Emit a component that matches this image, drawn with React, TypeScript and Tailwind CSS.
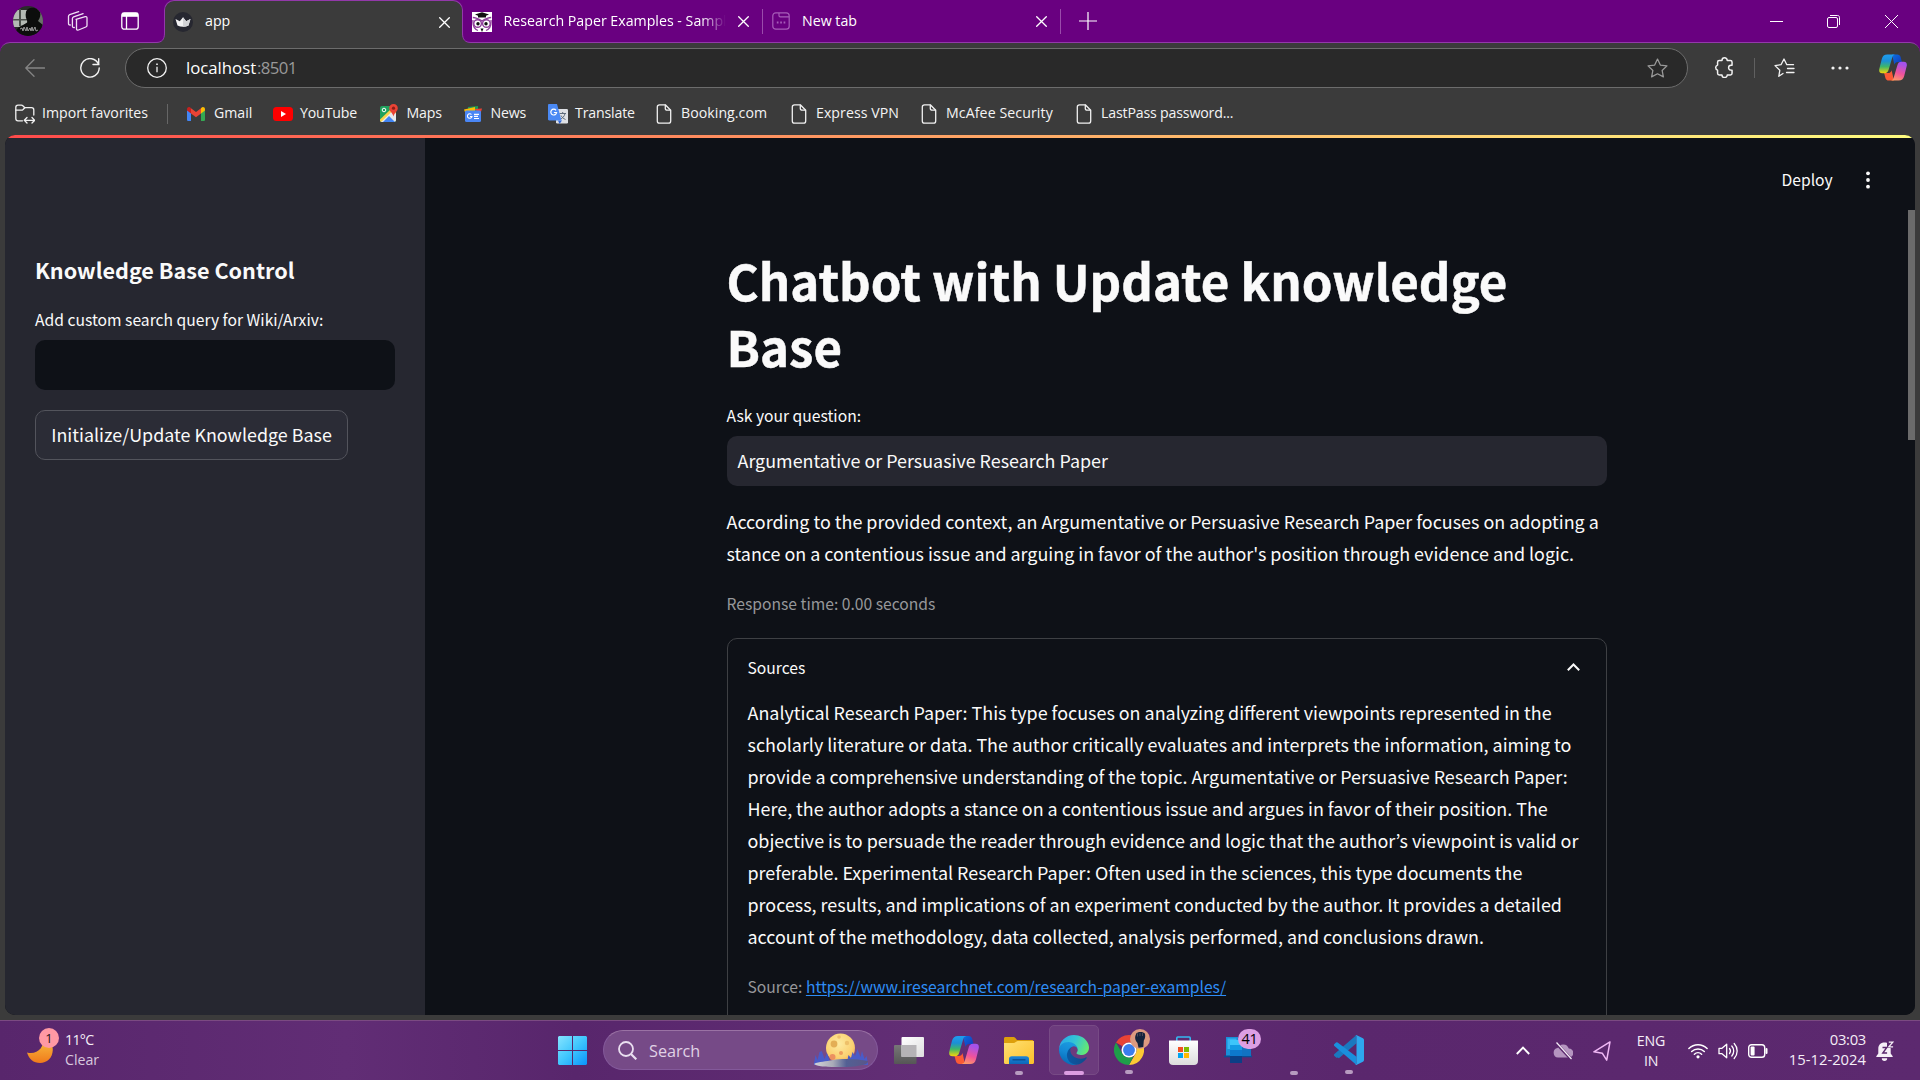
import type { ReactNode } from "react";

const UI = "font-['Open_Sans',sans-serif]";
const SRC = "font-['Noto_Sans_CJK_KR','Noto_Sans',sans-serif]";

/* ---------- Browser icons ---------- */

const Avatar = () => (
  <svg viewBox="0 0 30 30" className="h-[30px] w-[30px] rounded-full">
    <rect width="30" height="30" fill="#2a2c2a" />
    <path d="M0 4h14v17H0z" fill="#b4bab4" />
    <path d="M6 3h2v17H6zM0 13h14v1.600H0z" fill="#4b504b" />
    <path d="M22 2l8 4v14l-6-2z" fill="#6a706a" />
    <path d="M13 6c1-5 12-6 14 0 1 3 0 6-2 9l5 4v11H2c0-6 3-9 8-11l5-3c-2-3-3-6-2-10z" fill="#0c0d0c" />
    <path d="M7 23l2-1 1 3 1-4 2 4 1-4 1 4 2-3 1 3 1-4 1 4 2-4 1 4 2-1" stroke="#a8a8a8" strokeWidth=".9" fill="none" />
  </svg>
);

const Workspaces = () => (
  <svg viewBox="0 0 22 22" className="h-[22px] w-[22px]" fill="none" stroke="#f0dff4" strokeWidth="1.300" strokeLinejoin="round">
    <path d="M9 9.300l9.200-2.600c1-.3 1.800.2 1.800 1.200v7.500c0 .8-.4 1.300-1.200 1.600L11.500 20c-1.300.4-2-.1-2-1.300V9.300z" />
    <path d="M7.300 17.500c-1.200.2-1.900-.3-1.900-1.400V8.500c0-.9.4-1.400 1.200-1.700l9.500-3.100" strokeLinecap="round" />
    <path d="M3.300 15c-1.200.1-1.800-.4-1.800-1.400V6.300c0-.9.4-1.400 1.200-1.700l9-3" strokeLinecap="round" />
  </svg>
);

const TabActions = () => (
  <svg viewBox="0 0 18 18" className="h-[18px] w-[18px]" fill="none" stroke="#fff" strokeWidth="1.300">
    <rect x=".8" y=".8" width="16.400" height="16.400" rx="2.500" />
    <path d="M1 2.800h16" strokeWidth="4" />
    <path d="M5.500 4v13" />
  </svg>
);

const Crown = () => (
  <svg viewBox="0 0 20 20" className="h-[20px] w-[20px]">
    <circle cx="10" cy="10" r="10" fill="#262730" />
    <path d="M2.500 7l4.300 2.200L10 5.200l3.200 4L17.500 7l-2 6.500c-3.500 1.600-7.500 1.600-11 0z" fill="#f2f2f3" />
    <path d="M10 5.200l3.200 4L17.500 7l-2 6.500c-1.700.8-3.500 1.200-5.500 1.200z" fill="#d2d3d6" />
  </svg>
);

const Owl = () => (
  <svg viewBox="0 0 20 20" className="h-[20px] w-[20px]">
    <rect width="20" height="20" fill="#fff" />
    <path d="M3 2.500L10 .3l7 2.200-3 1.300v1.700H6V3.800z" fill="#111" />
    <path d="M.8 5.500C4 5.500 6 6.500 10 9c4-2.500 6-3.500 9.200-3.500M1 8c-.5 6 1 9 5 10.500M19 8c.5 6-1 9-5 10.500" stroke="#8f3f9b" strokeWidth="1.300" fill="none" />
    <circle cx="5.600" cy="11.500" r="3.800" fill="#fff" stroke="#8f3f9b" strokeWidth="1.400" />
    <circle cx="14.400" cy="11.500" r="3.800" fill="#fff" stroke="#8f3f9b" strokeWidth="1.400" />
    <circle cx="6" cy="11.800" r="1.700" fill="#111" />
    <circle cx="14" cy="11.800" r="1.700" fill="#111" />
    <path d="M8.500 16.500h3L10 20z" fill="#111" />
  </svg>
);

const NewTabIcon = () => (
  <svg viewBox="0 0 18 18" className="h-[18px] w-[18px]" fill="none" stroke="#a75db8" strokeWidth="1.200">
    <rect x=".8" y=".8" width="16.400" height="16.400" rx="3" />
    <path d="M7 1v2.500c0 .8.500 1.300 1.300 1.300H17" />
    <path d="M4.800 10.500h1.700M8.200 10.500h1.700M11.600 10.500h1.700" strokeWidth="1.800" />
  </svg>
);

const Cross = ({ className = "h-[11px] w-[11px]" }: { className?: string }) => (
  <svg viewBox="0 0 11 11" className={className} fill="none" stroke="#fff" strokeWidth="1.300" strokeLinecap="round">
    <path d="M.7.7l9.600 9.600M10.300.7L.7 10.300" />
  </svg>
);

const Copilot = ({ id, className }: { id: string; className: string }) => (
  <svg viewBox="0 0 30 28" className={className}>
    <defs>
      <linearGradient id={id + "a"} x1="0" y1="0" x2="0" y2="1">
        <stop offset="0" stopColor="#1f9df0" />
        <stop offset=".35" stopColor="#1b8fd6" />
        <stop offset=".65" stopColor="#3fb768" />
        <stop offset="1" stopColor="#f7d40a" />
      </linearGradient>
      <linearGradient id={id + "b"} x1=".3" y1="0" x2="0" y2="1">
        <stop offset="0" stopColor="#a552ea" />
        <stop offset=".5" stopColor="#f0539b" />
        <stop offset="1" stopColor="#ffa65e" />
      </linearGradient>
      <linearGradient id={id + "c"} x1="0" y1="0" x2="1" y2="1">
        <stop offset="0" stopColor="#0a6fe0" />
        <stop offset="1" stopColor="#1435b8" />
      </linearGradient>
    </defs>
    <path d="M14 0h5.500c2 0 3.200 1 3.700 3l1.300 5h-4c-2.500 0-3.300 1-4 3z" fill={"url(#" + id + "c)"} />
    <path d="M16 28h-5.500c-2 0-3.200-1-3.700-3L5.500 20h4c2.500 0 3.300-1 4-3z" fill="#fb5a35" />
    <path d="M9 0h8.500c-2 .3-2.800 1.500-3.300 3.200L10.300 16.500C9.600 19 8.300 20.200 6 20.200H3.500C.8 20.200-.3 18.500.3 15.500L3 4.800C3.900 1.500 5.700 0 9 0z" fill={"url(#" + id + "a)"} />
    <path d="M21 28h-8.500c2-.3 2.800-1.500 3.300-3.200l3.900-13.300C20.400 9 21.700 7.800 24 7.800h2.500c2.700 0 3.800 1.700 3.200 4.700L27 23.200C26.100 26.500 24.300 28 21 28z" fill={"url(#" + id + "b)"} />
  </svg>
);

const FileIcon = () => (
  <svg viewBox="0 0 15 20" className="ml-[.5px] h-[20px] w-[16px]" fill="none" stroke="#f1f1f1" strokeWidth="1.300" strokeLinejoin="round">
    <path d="M3 .8h5.800l5.400 5.400V17c0 1.400-.8 2.200-2.200 2.200H3C1.600 19.200.8 18.400.8 17V3C.8 1.600 1.600.8 3 .8z" />
    <path d="M8.800.8v3.600c0 1.200.6 1.800 1.800 1.800h3.600" />
  </svg>
);

const ImportIcon = () => (
  <svg viewBox="0 0 20 20" className="h-[20px] w-[20px]" fill="none" stroke="#f1f1f1" strokeWidth="1.300" strokeLinejoin="round" strokeLinecap="round">
    <path d="M7.500 16.800H3c-1.400 0-2.200-.8-2.200-2.200V3.400C.8 2 1.600 1.200 3 1.200h3.300c.8 0 1.300.3 1.800.8l1.700 1.700h6.800c1.400 0 2.200.8 2.200 2.200V11" />
    <path d="M.8 6.200h5.500c.8 0 1.300-.2 1.800-.7l1.700-1.800" />
    <path d="M9.500 16.300h10M12 13.500l-2.700 2.800L12 19M17 13.500l2.700 2.800L17 19" />
  </svg>
);

const Gmail = () => (
  <svg viewBox="0 0 18 14" className="h-[14px] w-[18px]">
    <path d="M0 3v9.700C0 13.500.6 14 1.300 14H4V5z" fill="#4285f4" />
    <path d="M18 3v9.700c0 .8-.6 1.300-1.300 1.300H14V5z" fill="#34a853" />
    <path d="M4 1.200l5 3.900 5-3.900v5.300L9 10.300 4 6.500z" fill="#ea4335" />
    <path d="M0 2.200C0 .2 2.300-.7 3.800.9L4 1.200v5.300L0 3.500z" fill="#c5221f" />
    <path d="M18 2.200c0-2-2.300-2.900-3.800-1.300l-.2.300v5.300l4-3z" fill="#fbbc04" />
  </svg>
);

const YouTube = () => (
  <svg viewBox="0 0 20 14" className="h-[14px] w-[20px]">
    <rect width="20" height="14" rx="3.500" fill="#f00" />
    <path d="M8 4l5 3-5 3z" fill="#fff" />
  </svg>
);

const Maps = () => (
  <svg viewBox="0 0 18 19" className="h-[19px] w-[18px]">
    <rect x="0" y="2" width="16" height="16" rx="2" fill="#1fa15d" />
    <path d="M0 15.500L12 4l4 2v4L6 18H1.500C.6 18 0 17.400 0 16.500z" fill="#f9d24a" />
    <path d="M1 18L12 7.500l4 2V16c0 1.200-.8 2-2 2z" fill="#e8eaed" />
    <path d="M3 18l6-6 6 6z" fill="#4285f4" />
    <circle cx="4" cy="6" r="1.800" fill="none" stroke="#fff" strokeWidth="1" />
    <path d="M13.500 0C11 0 9.200 1.800 9.200 4.200c0 3 3.500 4.300 4.300 8.300.8-4 4.300-5.300 4.300-8.300C17.800 1.800 16 0 13.500 0z" fill="#ea4335" />
    <circle cx="13.500" cy="4.200" r="1.600" fill="#8c1d18" />
  </svg>
);

const News = () => (
  <svg viewBox="0 0 18 16" className="h-[16px] w-[18px]">
    <path d="M4 1l10-1v6H4z" fill="#1e9e55" />
    <path d="M10 3l8-.5-1.500 5z" fill="#ea4335" />
    <path d="M0 3.500L11 1v6L2 9z" fill="#fbbc04" />
    <rect x="1" y="4.500" width="16" height="11.500" rx="1.500" fill="#4a86f5" />
    <path d="M7.500 8.500A2.300 2.300 0 1 0 8 10.500H6" fill="none" stroke="#fff" strokeWidth="1.100" />
    <path d="M10 8.300h5M10 10.400h4M10 12.500h5" stroke="#fff" strokeWidth="1.200" />
  </svg>
);

const TranslateIcon = () => (
  <svg viewBox="0 0 20 20" className="h-[20px] w-[20px]">
    <rect x="8" y="5" width="12" height="14.500" rx="1.200" fill="#dfe1e5" />
    <path d="M11.500 9.500h6.500M14.700 8v1.500M17 9.500c-.5 3-2.500 4.500-4.500 5.500M13 11.500c1 2 2.500 3 4.500 4" stroke="#5f6c7b" strokeWidth="1" fill="none" />
    <path d="M10 16.500h4L11.500 20z" fill="#3367d6" />
    <path d="M1.200 0H9l4.500 16.500H1.200C.5 16.500 0 16 0 15.300V1.200C0 .5.500 0 1.200 0z" fill="#4a89f4" />
    <path d="M8 6.300A2.900 2.900 0 1 0 8.600 8.500H5.900" fill="none" stroke="#fff" strokeWidth="1.200" />
  </svg>
);

/* ---------- Browser chrome ---------- */

const Flare = ({ flip = false }: { flip?: boolean }) => (
  <svg
    viewBox="0 0 9 10"
    className={
      flip
        ? "absolute bottom-0 left-full h-[10px] w-[9px] -scale-x-100"
        : "absolute right-full bottom-0 h-[10px] w-[9px]"
    }
  >
    <path d="M9 0v10H0v-.5C6 9.500 8.500 6.500 8.500 0z" fill="#3b3b3b" />
    <path d="M0 9.500C6 9.500 8.500 6.500 8.500 0" fill="none" stroke="#9339aa" />
  </svg>
);

const TitleBar = () => (
  <div className="flex h-[42px] items-center bg-[#690080] text-[14.200px] text-white">
    <div className="ml-[13px]"><Avatar /></div>
    <div className="ml-[24px]"><Workspaces /></div>
    <div className="ml-[32px]"><TabActions /></div>
    <div className="relative z-10 -mb-[1px] ml-[25px] flex h-[43px] w-[299px] shrink-0 items-center rounded-t-[10px] border border-b-0 border-[#9339aa] bg-[#3b3b3b]">
      <Flare />
      <Flare flip />
      <div className="ml-[8px]"><Crown /></div>
      <span className="-mt-[3px] ml-[12px]">app</span>
      <Cross className="mr-[12px] ml-auto h-[11px] w-[11px]" />
    </div>
    <div className="mt-[1px] ml-[9px]"><Owl /></div>
    <div className="-mt-[1px] ml-[11.500px] w-[224px] whitespace-nowrap [mask-image:linear-gradient(to_right,black_88%,transparent_99%)]">
      Research Paper Examples - Sampl
    </div>
    <Cross className="ml-[10px] h-[11px] w-[11px]" />
    <div className="ml-[13px] h-[25px] w-px bg-[#9a4bab]" />
    <div className="ml-[9px]"><NewTabIcon /></div>
    <span className="-mt-[1px] ml-[12.500px] w-[233.500px]">New tab</span>
    <Cross className="h-[11px] w-[11px]" />
    <div className="ml-[13px] h-[25px] w-px bg-[#9a4bab]" />
    <svg viewBox="0 0 18 18" className="ml-[18px] h-[18px] w-[18px]" stroke="#fff" strokeWidth="1.200"><path d="M9 0v18M0 9h18" /></svg>
    <svg viewBox="0 0 13 13" className="ml-auto h-[13px] w-[13px]" stroke="#fff"><path d="M0 6.500h13" /></svg>
    <svg viewBox="0 0 13 13" className="ml-[44px] h-[13px] w-[13px]" fill="none" stroke="#fff">
      <rect x=".5" y="2.500" width="10" height="10" rx="1.500" />
      <path d="M3 .5h7.500c1.300 0 2 .7 2 2V10" />
    </svg>
    <svg viewBox="0 0 13 13" className="mr-[22px] ml-[45px] h-[13px] w-[13px]" stroke="#fff"><path d="M0 0l13 13M13 0L0 13" /></svg>
  </div>
);

const AddressRow = () => (
  <div className="flex h-[49px] items-center">
    <svg viewBox="0 0 20 18" className="ml-[25px] h-[18px] w-[20px]" fill="none" stroke="#858585" strokeWidth="1.300" strokeLinecap="round" strokeLinejoin="round">
      <path d="M19.500 9H.8M9 .8L.8 9 9 17.200" />
    </svg>
    <svg viewBox="0 0 20 20" className="ml-[35px] h-[20px] w-[20px]" fill="none" stroke="#f3f3f3" strokeWidth="1.400" strokeLinecap="round">
      <path d="M18.500 6.300A9.200 9.200 0 1 0 19.200 10" />
      <path d="M18.700.8v5.700h-5.700" />
    </svg>
    <div className="ml-[25px] flex h-[40px] w-[1563px] shrink-0 items-center rounded-full border border-[#6c6c6c] bg-[#292929]">
      <svg viewBox="0 0 20 20" className="ml-[21px] h-[20px] w-[20px]" fill="none" stroke="#f3f3f3" strokeWidth="1.300">
        <circle cx="10" cy="10" r="9.300" />
        <path d="M10 8.800v5.500" />
        <path d="M10 5.500v1.600" strokeWidth="1.600" />
      </svg>
      <span className="ml-[19px] w-[71px] text-[16.800px] tracking-[-0.020px] text-white">localhost</span>
      <span className="text-[16.800px] tracking-[-0.600px] text-[#999]">:8501</span>
      <svg viewBox="0 0 20 19" className="mr-[19px] ml-auto h-[20px] w-[21px]" fill="none" stroke="#9a9a9a" strokeWidth="1.200" strokeLinejoin="round">
        <path d="M10 1l2.700 5.700 6.300.8-4.600 4.300 1.200 6.200L10 15l-5.600 3 1.200-6.200L1 7.500l6.300-.8z" />
      </svg>
    </div>
    <svg viewBox="0 0 20 20" className="ml-[26px] h-[21px] w-[21px]" fill="none" stroke="#f3f3f3" strokeWidth="1.400" strokeLinejoin="round">
      <path d="M7.600 3.300a2.500 2.500 0 0 1 5 0h3c1 0 1.600.6 1.600 1.600v3h-1a2.300 2.300 0 0 0 0 4.600h1v3c0 1-.6 1.600-1.600 1.600h-3a2.500 2.500 0 0 1-5 0H5c-1 0-1.600-.6-1.600-1.600v-3a2.500 2.500 0 0 1 0-4.800V4.900c0-1 .6-1.600 1.600-1.600z" />
    </svg>
    <div className="ml-[19px] h-[20px] w-px bg-[#606060]" />
    <svg viewBox="0 0 21 20" className="ml-[19px] h-[20px] w-[21px]" fill="none" stroke="#f3f3f3" strokeWidth="1.300" strokeLinejoin="round" strokeLinecap="round">
      <path d="M9 15.500L4.800 18.300l1-6L1 7.600l6-.9L10 1l2.800 5.700h6.700" />
      <path d="M13.500 10.500h6.500M12.500 14.500h7.500" />
    </svg>
    <svg viewBox="0 0 18 4" className="ml-[36px] h-[4px] w-[18px]" fill="#f3f3f3"><circle cx="2" cy="2" r="1.600" /><circle cx="9" cy="2" r="1.600" /><circle cx="16" cy="2" r="1.600" /></svg>
    <Copilot id="top" className="ml-[30px] h-[27px] w-[28px]" />
  </div>
);

const Bookmark = ({ icon, label, className }: { icon: ReactNode; label: string; className: string }) => (
  <div className={"flex shrink-0 items-center whitespace-nowrap " + className}>
    <div className="flex w-[27px] shrink-0 items-center">{icon}</div>
    <span>{label}</span>
  </div>
);

const FileBookmark = ({ label, className }: { label: string; className: string }) => (
  <div className={"flex shrink-0 items-center whitespace-nowrap " + className}>
    <div className="flex w-[26px] shrink-0 items-center"><FileIcon /></div>
    <span>{label}</span>
  </div>
);

const BookmarksBar = () => (
  <div className="flex h-[43px] items-center pl-[15px] text-[14.150px] leading-none text-[#f4f4f4]">
    <Bookmark icon={<ImportIcon />} label="Import favorites" className="w-[152px]" />
    <div className="mr-[19px] h-[20px] w-px bg-[#666]" />
    <Bookmark icon={<Gmail />} label="Gmail" className="w-[86px]" />
    <Bookmark icon={<YouTube />} label="YouTube" className="w-[106.500px] tracking-[-0.150px]" />
    <Bookmark icon={<Maps />} label="Maps" className="w-[84px] tracking-[-0.200px]" />
    <Bookmark icon={<News />} label="News" className="w-[84.500px] tracking-[-0.200px]" />
    <Bookmark icon={<TranslateIcon />} label="Translate" className="w-[107px] tracking-[-0.150px]" />
    <FileBookmark label="Booking.com" className="w-[135px] tracking-[0.050px]" />
    <FileBookmark label="Express VPN" className="w-[130px] tracking-[0.050px]" />
    <FileBookmark label="McAfee Security" className="w-[155px] tracking-[0.100px]" />
    <FileBookmark label="LastPass password..." className="tracking-[-0.160px]" />
  </div>
);

/* ---------- Page ---------- */

const sourceLines = [
  "Analytical Research Paper: This type focuses on analyzing different viewpoints represented in the",
  "scholarly literature or data. The author critically evaluates and interprets the information, aiming to",
  "provide a comprehensive understanding of the topic. Argumentative or Persuasive Research Paper:",
  "Here, the author adopts a stance on a contentious issue and argues in favor of their position. The",
  "objective is to persuade the reader through evidence and logic that the author’s viewpoint is valid or",
  "preferable. Experimental Research Paper: Often used in the sciences, this type documents the",
  "process, results, and implications of an experiment conducted by the author. It provides a detailed",
  "account of the methodology, data collected, analysis performed, and conclusions drawn.",
];

const Sidebar = () => (
  <aside className="flex w-[420px] shrink-0 flex-col items-start bg-[#262730] pl-[30px]">
    <h2 className="mt-[117px] h-[30px] text-[21.600px] leading-[30px] font-bold">Knowledge Base Control</h2>
    <label className="mt-[25px] h-[20px] text-[15.660px] leading-[20px]">Add custom search query for Wiki/Arxiv:</label>
    <div className="mt-[10px] h-[50px] w-[360px] rounded-[10px] bg-[#0e1117]" />
    <button className="mt-[20px] h-[50px] w-[313px] rounded-[10px] border border-[#53545c] bg-[#2b2c36] pb-[2px] text-[17.890px] leading-[46px] whitespace-nowrap">
      Initialize/Update Knowledge Base
    </button>
  </aside>
);

const Main = () => (
  <main className="relative flex flex-1 overflow-hidden bg-[#0e1117]">
    <div className="ml-[302px] flex w-[880px] shrink-0 flex-col whitespace-nowrap">
      <h1 className="mt-[109px] -ml-[.5px] shrink-0 text-[49.200px] leading-[66px] font-bold [-webkit-text-stroke:0.5px_#fafafa]">
        Chatbot with Update knowledge
        <br />
        Base
      </h1>
      <label className="mt-[27px] -ml-[.5px] h-[20px] shrink-0 text-[15.660px] leading-[20px]">Ask your question:</label>
      <div className="mt-[10px] h-[50px] shrink-0 rounded-[10px] bg-[#262730] pl-[10.500px] text-[17.900px] leading-[48px]">
        Argumentative or Persuasive Research Paper
      </div>
      <p className="mt-[19px] -ml-[.5px] shrink-0 text-[17.910px] leading-[32px]">
        According to the provided context, an Argumentative or Persuasive Research Paper focuses on adopting a
        <br />
        stance on a contentious issue and arguing in favor of the author's position through evidence and logic.
      </p>
      <p className="mt-[25px] -ml-[.5px] h-[20px] shrink-0 text-[15.660px] leading-[20px] text-[#96979a]">Response time: 0.00 seconds</p>
      <section className="mt-[24px] h-[420px] shrink-0 rounded-t-[10px] border border-[#3e4044] pr-[20px] pl-[19.500px]">
        <div className="mt-[19px] flex h-[20px] items-center justify-between text-[15.660px] leading-[20px]">
          <span>Sources</span>
          <svg viewBox="0 0 13 8" className="mr-[6px] mb-[3px] h-[8px] w-[13px]" fill="none" stroke="#fafafa" strokeWidth="2">
            <path d="M.8 7.200l5.700-5.700 5.700 5.700" />
          </svg>
        </div>
        <p className="mt-[18px] text-[17.910px] leading-[32px]">
          {sourceLines.map((line) => (
            <span key={line} className="block">{line}</span>
          ))}
        </p>
        <p className="mt-[25px] text-[15.660px] leading-[20px] text-[#96979a]">
          Source: <a className="text-[#2f8df5] underline decoration-1 underline-offset-[2px]">https://www.iresearchnet.com/research-paper-examples/</a>
        </p>
      </section>
    </div>
    <div className="mt-[32px] ml-[174.500px] flex h-[20px] items-center text-[15.660px] leading-[20px]">
      <span className="w-[52px]">Deploy</span>
      <svg viewBox="0 0 4 18" className="ml-[32px] h-[18px] w-[4px]" fill="#fafafa"><circle cx="2" cy="2.300" r="1.900" /><circle cx="2" cy="9" r="1.900" /><circle cx="2" cy="15.700" r="1.900" /></svg>
    </div>
    <div className="mt-[72px] ml-auto h-[230px] w-[7px] shrink-0 bg-[#6b6b6b]" />
  </main>
);

/* ---------- Taskbar icons ---------- */

const Moon = () => (
  <svg viewBox="0 0 26 27" className="h-[27px] w-[26px]">
    <defs><linearGradient id="moon" x1="0" y1="0" x2="0" y2="1"><stop offset="0" stopColor="#f9c846" /><stop offset="1" stopColor="#f07a1b" /></linearGradient></defs>
    <path d="M16 0c7 3 10 9 9.800 14C25.500 22 20 27 13 27 6.500 27 2 23 0 16.500 10 19 18 12 16 0z" fill="url(#moon)" />
  </svg>
);

const StartIcon = () => (
  <svg viewBox="0 0 29 29" className="h-[29px] w-[29px]">
    <defs><linearGradient id="win" x1="0" y1="0" x2="1" y2="1"><stop offset="0" stopColor="#86e4ff" /><stop offset=".5" stopColor="#3fc6fd" /><stop offset="1" stopColor="#0a93fb" /></linearGradient></defs>
    <path d="M1 0h13v14H0V1zM15 0h13l1 1v13H15zM0 15h14v14H1l-1-1zM15 15h14v13l-1 1H15z" fill="url(#win)" />
  </svg>
);

const SearchMoon = () => (
  <svg viewBox="0 0 55 34" className="h-[34px] w-[55px]">
    <defs>
      <radialGradient id="sm" cx=".45" cy=".35" r=".7"><stop offset="0" stopColor="#fdeaa0" /><stop offset=".7" stopColor="#fbd070" /><stop offset="1" stopColor="#f0a052" /></radialGradient>
      <linearGradient id="sg" x1="0" y1="0" x2="1" y2="0"><stop offset="0" stopColor="#d4d4d8" /><stop offset=".35" stopColor="#a9abb8" /><stop offset=".6" stopColor="#536094" /><stop offset="1" stopColor="#5a5688" /></linearGradient>
    </defs>
    <circle cx="26.500" cy="15" r="14.500" fill="url(#sm)" />
    <circle cx="20" cy="11" r="3.400" fill="#e3ae55" /><circle cx="33" cy="10" r="2.200" fill="#eec06a" /><circle cx="25" cy="4" r="1.800" fill="#eec06a" /><circle cx="27" cy="20" r="2" fill="#ee9d5d" /><circle cx="18.500" cy="24" r="3" fill="#ec9160" />
    <path d="M0 30l1.500-8 2 5 2-8 2.300-1 2.700 8 2.500-6 3 9v3H0zM33 29l1.500-7 2.500 3 1.500-6 2.500 4 2.500-7 3 8 1.500-6 2.500 8 2-3 1.500 7v2H33z" fill="#4a5bc8" />
    <path d="M0 31c5-3 12-2 19-4 9-2 27-1 35 1 1 4-12 6-27 6C14 34 4 34 0 31z" fill="url(#sg)" />
  </svg>
);

const TaskView = () => (
  <svg viewBox="0 0 30 27" className="mb-[1px] h-[27px] w-[30px]">
    <defs>
      <linearGradient id="tv" x1="0" y1="0" x2="1" y2="1"><stop offset="0" stopColor="#fff" /><stop offset="1" stopColor="#dedede" /></linearGradient>
      <linearGradient id="tv2" x1="0" y1="0" x2="0" y2="1"><stop offset="0" stopColor="#777" /><stop offset="1" stopColor="#565656" /></linearGradient>
    </defs>
    <rect x="0" y="8" width="22.500" height="19" rx="1" fill="url(#tv2)" />
    <rect x="7.500" y="0" width="22.500" height="20" rx="1" fill="url(#tv)" />
    <path d="M7.500 8h15v12h-15z" fill="#b5b3b6" />
  </svg>
);

const Folder = () => (
  <svg viewBox="0 0 30 27" className="h-[27px] w-[30px]">
    <defs>
      <linearGradient id="fo" x1="0" y1="0" x2="1" y2="1"><stop offset="0" stopColor="#ffe073" /><stop offset="1" stopColor="#fbc02a" /></linearGradient>
      <linearGradient id="fb" x1="0" y1="0" x2="0" y2="1"><stop offset="0" stopColor="#1c86d8" /><stop offset="1" stopColor="#0d67b9" /></linearGradient>
    </defs>
    <path d="M0 1.500C0 .6.600 0 1.500 0H9c1 0 1.700.2 2.400.9L13 3h15c1 0 1.500.6 1.500 1.500V12H0z" fill="#dd9f0b" />
    <path d="M0 6h9.500c1 0 1.600-.3 2.200-.9L13.500 4H30v21.500c0 .9-.6 1.500-1.500 1.500h-27C.6 27 0 26.400 0 25.500z" fill="url(#fo)" />
    <path d="M5 27v-5c0-1.800 1-2.800 2.800-2.800h14.400c1.800 0 2.800 1 2.800 2.800v5z" fill="url(#fb)" />
    <path d="M8.500 22.800h13" stroke="#0b4f92" strokeWidth="1.400" />
  </svg>
);

const Edge = () => (
  <svg viewBox="0 0 256 256" className="h-[30px] w-[30px]">
    <defs>
      <linearGradient id="e1" x1="0" y1="0" x2="1" y2="0"><stop offset="0" stopColor="#0c59a4" /><stop offset="1" stopColor="#114a8b" /></linearGradient>
      <linearGradient id="e2" x1=".6" y1="0" x2=".3" y2="1"><stop offset="0" stopColor="#1b9de2" /><stop offset=".5" stopColor="#1488d4" /><stop offset="1" stopColor="#0667b2" /></linearGradient>
      <linearGradient id="e3" x1="0" y1=".3" x2="1" y2=".6"><stop offset="0" stopColor="#28a8ea" /><stop offset=".5" stopColor="#35c5d3" /><stop offset="1" stopColor="#66eb6e" /></linearGradient>
    </defs>
    <path fill="url(#e1)" d="M231.070 190.540c-3.380 1.760-6.850 3.330-10.430 4.690a101.840 101.840 0 0 1-35.890 6.460c-47.310 0-88.510-32.540-88.510-74.310A31.520 31.520 0 0 1 112.700 100.200c-42.800 1.800-53.800 46.400-53.800 72.530 0 73.880 68.100 81.370 82.760 81.370 7.910 0 19.840-2.300 27-4.560l1.310-.44A128.340 128.340 0 0 0 236.600 196a4 4 0 0 0-5.530-5.460z" />
    <path fill="url(#e2)" d="M105.730 241.420A79.200 79.200 0 0 1 83 220.100a80.720 80.720 0 0 1 29.500-120c3.120-1.470 8.450-4.130 15.540-4a32.350 32.350 0 0 1 25.690 13 31.880 31.880 0 0 1 6.360 18.660c0-.21 24.460-79.600-80-79.600-43.900 0-80 41.660-80 78.210a130.150 130.150 0 0 0 12.110 56 128 128 0 0 0 156.380 67.110 75.550 75.550 0 0 1-62.850-8.060z" />
    <path fill="url(#e3)" d="M152.330 148.860c-.81 1.050-3.300 2.500-3.300 5.660 0 2.610 1.700 5.120 4.720 7.230 14.380 10 41.490 8.680 41.560 8.680a59.560 59.560 0 0 0 30.270-8.350A61.380 61.380 0 0 0 256 109.190c.26-22.410-8-37.310-11.340-43.910C223.460 23.840 177.720 0 128 0A128 128 0 0 0 0 126.200c.48-36.540 36.800-66.050 80-66.050 3.500 0 23.460.34 42 10.070 16.340 8.580 24.900 18.940 30.850 29.210 6.180 10.670 7.280 24.150 7.280 29.520s-2.760 13.390-7.800 19.910z" />
  </svg>
);

const Chrome = () => (
  <svg viewBox="0 0 48 48" className="h-[30px] w-[30px]">
    <path d="M24 0a24 24 0 0 1 20.800 12H24a12 12 0 0 0-10.400 6L3.200 12A24 24 0 0 1 24 0z" fill="#ea4335" />
    <path d="M44.800 12A24 24 0 0 1 24 48l10.400-18A12 12 0 0 0 34.400 18L31 12z" fill="#fcc934" />
    <path d="M3.200 12l10.400 18A12 12 0 0 0 24 36l7-1.500L24 48A24 24 0 0 1 3.200 12z" fill="#1e9e4a" />
    <path d="M24 12h20.800l-8 2L34 18z" fill="#ea4335" />
    <circle cx="24" cy="24" r="12" fill="#fff" />
    <circle cx="24" cy="24" r="9.500" fill="#3b7ded" />
  </svg>
);

const FistBadge = () => (
  <svg viewBox="0 0 20 20" className="absolute -top-[6px] left-[16px] h-[20px] w-[20px]">
    <circle cx="10" cy="10" r="10" fill="#dd9a80" />
    <path d="M6.500 4c2-1.500 6-1.500 8 0 1.300 2 .8 5.500-.7 7.500l-.5 6.500-4.800.8L7.500 14C5.300 12 4.800 9 5.300 7z" fill="#14233c" />
    <path d="M7.500 4.500v3M10 4v3M12.500 4v3" stroke="#5d5560" strokeWidth=".8" />
  </svg>
);

const Store = () => (
  <svg viewBox="0 0 29 29" className="h-[29px] w-[29px]">
    <defs><linearGradient id="st" x1="0" y1="0" x2="0" y2="1"><stop offset="0" stopColor="#fff" /><stop offset="1" stopColor="#dcdcdc" /></linearGradient></defs>
    <path d="M7.800 6V2c0-.6.400-1 1-1h11.400c.6 0 1 .4 1 1v4" fill="none" stroke="#35b8f1" strokeWidth="1.600" />
    <path d="M0 4.500h29V25c0 2.500-1.500 4-4 4H4c-2.500 0-4-1.500-4-4z" fill="url(#st)" />
    <path d="M9 11h5v5H9z" fill="#f25022" /><path d="M15 11h5v5h-5z" fill="#7fba00" /><path d="M9 17h5v5H9z" fill="#00a4ef" /><path d="M15 17h5v5h-5z" fill="#ffb900" />
  </svg>
);

const PhoneStack = () => (
  <svg viewBox="0 0 29 26" className="h-[26px] w-[29px]">
    <path d="M2 0h12v20H2z" fill="#1a8fd8" /><path d="M3.500 1.500h9V12h-9z" fill="#36b3f2" />
    <path d="M0 18.500h28v1.800H0z" fill="#0a4e96" /><path d="M18 3h9v16h-9z" fill="#1173c2" />
    <path d="M6 3h12v23H6z" fill="#149be4" /><path d="M6 3h12v5H6z" fill="#3dc6fb" /><path d="M6 13h12v6H6z" fill="#0d78cc" /><path d="M6 19h12v7H6z" fill="#0b3f86" />
  </svg>
);

const VSCode = () => (
  <svg viewBox="0 0 24 24" className="h-[30px] w-[30px]">
    <path d="M18 0v6.552L3.900 18.500l-.974-.502a1 1 0 0 1-1.276-.057L.327 16.739a1 1 0 0 1 0-1.479z" fill="#1a78bf" />
    <path d="M18 24v-6.552L2.926 6.002a1 1 0 0 0-1.276.057L.327 7.261a1 1 0 0 0 0 1.479z" fill="#1a8fdc" />
    <path d="M16.505.5a1.500 1.500 0 0 1 1.705-.29l4.940 2.377A1.500 1.500 0 0 1 24 3.940v16.120a1.500 1.500 0 0 1-.85 1.352l-4.940 2.377a1.500 1.500 0 0 1-1.705-.29c.55.55 1.500.15 1.500-.64V1.140c0-.79-.95-1.190-1.500-.64z" fill="#2ea7ee" />
  </svg>
);

const TaskItem = ({ children, className, running = false }: { children: ReactNode; className: string; running?: boolean }) => (
  <div className={"relative flex shrink-0 items-center justify-center " + className}>
    {children}
    {running && <span className="absolute top-[calc(50%+20px)] left-1/2 h-[4px] w-[8px] -translate-x-1/2 rounded-full bg-[#b79bc0]" />}
  </div>
);

const Taskbar = () => (
  <footer className="flex h-[60px] items-center border-t border-[#7b4a82] bg-[linear-gradient(90deg,#58266c,#612d75_18%,#58266c_30%,#622e75_48%,#5a276d_70%,#5c296f)] text-[14.200px] leading-[20px] text-[#f5eef7]">
    <div className="relative ml-[27px] h-[40px] w-[38px] shrink-0 pt-[5px]">
      <Moon />
      <span className="absolute -top-[3px] left-[12px] flex h-[20px] w-[20px] items-center justify-center rounded-full bg-[#ff99a4] text-[13px] text-[#2b1420]">1</span>
    </div>
    <div className="-mt-[2px] w-[34px] whitespace-nowrap"><div className="tracking-[-0.700px]">11°C</div><div className="text-[#d8c8de]">Clear</div></div>
    <TaskItem className="ml-[459px]"><StartIcon /></TaskItem>
    <div className="-mt-[1px] ml-[16px] flex h-[40px] w-[275px] shrink-0 items-center rounded-full border border-[#83599a] border-t-[#9a72a4] bg-[#764a87]">
      <svg viewBox="0 0 19 19" className="ml-[14px] h-[19px] w-[19px]" fill="none" stroke="#eadff0" strokeWidth="1.800"><circle cx="8" cy="8" r="7" /><path d="M13 13l5.300 5.300" strokeWidth="2.200" /></svg>
      <span className="mt-[1px] ml-[12px] text-[16.200px] text-[#e0d2e6]">Search</span>
      <div className="mr-[8px] ml-auto"><SearchMoon /></div>
    </div>
    <TaskItem className="ml-[16px]"><TaskView /></TaskItem>
    <TaskItem className="-mt-[2px] ml-[25px]"><Copilot id="task" className="h-[28px] w-[30px]" /></TaskItem>
    <TaskItem className="ml-[25px]" running><Folder /></TaskItem>
    <TaskItem className="-mt-[1px] ml-[15px] h-[50px] w-[50px] rounded-[5px] border border-[#774a85] bg-[#6c3b7d]">
      <Edge />
      <span className="absolute -bottom-px left-[14px] h-[4px] w-[20px] rounded-full bg-[#dc9de2]" />
    </TaskItem>
    <TaskItem className="-mt-[1px] ml-[15px] w-[30px]" running><Chrome /><FistBadge /></TaskItem>
    <TaskItem className="ml-[25px]"><Store /></TaskItem>
    <TaskItem className="-mt-[1px] ml-[26px]">
      <PhoneStack />
      <span className="absolute -top-[8px] left-[14px] flex h-[20px] w-[23px] items-center justify-center rounded-full bg-[#dc9fe4] text-[14.500px] tracking-[-0.300px] text-black">41</span>
    </TaskItem>
    <TaskItem className="ml-[36px] w-[10px]" running><span /></TaskItem>
    <TaskItem className="-mt-[1px] ml-[35px]" running><VSCode /></TaskItem>

    <svg viewBox="0 0 14 9" className="ml-[152px] h-[9px] w-[14px]" fill="none" stroke="#fff" strokeWidth="1.900"><path d="M.8 8L7 1.600 13.200 8" /></svg>
    <svg viewBox="0 0 20 18" className="ml-[23px] h-[18px] w-[20px]">
      <path d="M5 15.500a4.800 4.800 0 0 1-.4-9.500A6 6 0 0 1 15.800 6.500a4.500 4.500 0 0 1 0 9z" fill="#b595c0" />
      <path d="M3 1l15 16" stroke="#5a276d" strokeWidth="3" /><path d="M3.500.5L18.500 17" stroke="#f5eef7" strokeWidth="1.200" />
    </svg>
    <svg viewBox="0 0 18 20" className="ml-[20px] h-[20px] w-[18px]" fill="none" stroke="#f0b8f5" strokeWidth="1.500" strokeLinejoin="round"><path d="M17 .9L.9 10.800l8.500 1.500 4.300 6.800z" /></svg>
    <div className="ml-[24px] w-[32px] shrink-0 text-center tracking-[-0.200px]"><div>ENG</div><div>IN</div></div>
    <svg viewBox="0 0 20 16" className="ml-[21px] h-[16px] w-[20px]" fill="none" stroke="#fff" strokeWidth="1.500" strokeLinecap="round">
      <path d="M.9 5.500a13 13 0 0 1 18.200 0M3.700 8.500a9 9 0 0 1 12.600 0M6.400 11.300a5.200 5.200 0 0 1 7.200 0" /><circle cx="10" cy="13.800" r="1.600" fill="#fff" stroke="none" />
    </svg>
    <svg viewBox="0 0 20 18" className="ml-[10px] h-[18px] w-[20px]" fill="none" stroke="#fff" strokeWidth="1.300" strokeLinejoin="round" strokeLinecap="round">
      <path d="M1 6.300h3L8.700 2.200v13.600L4 11.700H1zM11.500 6.500a4 4 0 0 1 0 5M13.800 4a7.500 7.500 0 0 1 0 10M16.200 1.500a11 11 0 0 1 0 15" />
    </svg>
    <svg viewBox="0 0 20 14" className="ml-[10px] h-[14px] w-[20px]" fill="none" stroke="#fff" strokeWidth="1.400">
      <rect x=".7" y=".7" width="16" height="12.600" rx="2.800" /><rect x="2.600" y="2.600" width="4" height="8.800" rx="1" fill="#fff" stroke="none" /><path d="M18.500 5v4" strokeWidth="2" strokeLinecap="round" />
    </svg>
    <div className="-mt-[4px] ml-[17px] w-[81px] shrink-0 text-right text-[14.800px] whitespace-nowrap"><div className="tracking-[-0.300px]">03:03</div><div>15-12-2024</div></div>
    <svg viewBox="0 0 18 20" className="mt-[1px] ml-[10px] h-[20px] w-[18px] shrink-0">
      <path d="M8.500 1.500C4.500 1.500 2.300 4 2.300 8v4.500L.3 15.300V16h16.400v-.7l-2-2.800V8C14.700 4 12.500 1.500 8.500 1.500z" fill="#f5eef7" />
      <path d="M5.800 17.300h5.400a2.700 2.700 0 0 1-5.400 0z" fill="#f5eef7" />
      <path d="M11 0h7v7h-7z" fill="#5a276d" />
      <path d="M6.500 6.500h4.300l-4 5.500h4.300" fill="none" stroke="#5a276d" strokeWidth="1.400" />
      <path d="M12.800 1.200h4l-4 4.600h4.300" fill="none" stroke="#f5eef7" strokeWidth="1.300" />
    </svg>
  </footer>
);

export default function App() {
  return (
    <div className={"flex h-[1080px] w-[1920px] flex-col overflow-hidden bg-[#690080] " + UI}>
      <TitleBar />
      <div className="flex h-[978px] flex-col rounded-t-[10px] border-t border-[#9339aa] bg-[#3b3b3b]">
        <AddressRow />
        <BookmarksBar />
        <div className={"mx-[5px] flex h-[880px] flex-col overflow-hidden rounded-[10px] bg-[#0e1117] text-[#fafafa] " + SRC}>
          <div className="h-[3px] shrink-0 bg-[linear-gradient(90deg,#ff4b4b,#fffd80)]" />
          <div className="flex flex-1 overflow-hidden">
            <Sidebar />
            <Main />
          </div>
        </div>
      </div>
      <Taskbar />
    </div>
  );
}
